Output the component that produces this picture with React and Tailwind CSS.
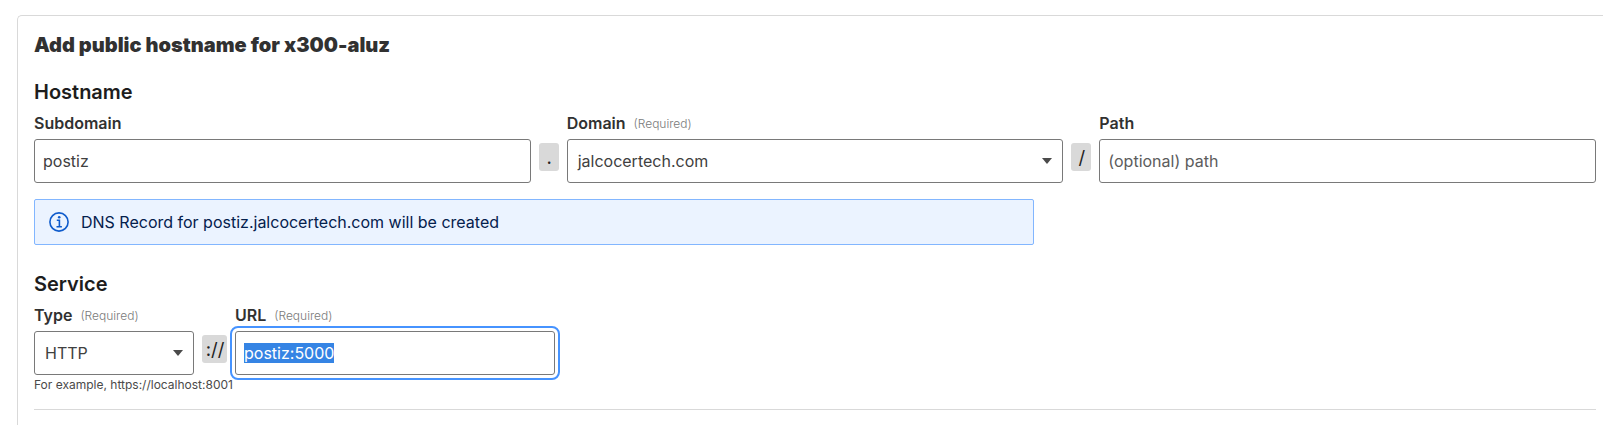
function Label({ children, required }) {
  return (
    <div className="flex h-6 items-center gap-2 leading-6">
      <span className="font-semibold text-[#313131]">{children}</span>
      {required && <span className="pt-px text-xs font-light text-[#7a7a7a]">(Required)</span>}
    </div>
  );
}

function Caret() {
  return (
    <svg className="h-[6px] w-[10px] shrink-0" viewBox="0 0 10 6" fill="#4a4a4a">
      <path d="M0 0h10L5 6z" />
    </svg>
  );
}

function Select({ children }) {
  return (
    <div className="flex h-11 items-center justify-between rounded-[3px] border border-[#797979] pr-[10px] pl-[10px] text-[#404040]">
      <span>{children}</span>
      <Caret />
    </div>
  );
}

function Separator({ children, wide }) {
  return (
    <div
      className={
        (wide ? "w-[25px]" : "w-5") +
        " mt-8 flex h-7 shrink-0 items-center justify-center rounded-[3px] bg-[#d9d9d9] pt-px pl-px text-[18.5px] leading-none text-[#222222]"
      }
    >
      {children}
    </div>
  );
}

function Input({ children }) {
  return (
    <div className="flex h-11 items-center rounded-[3px] border border-[#797979] px-2 text-[#404040]">
      {children}
    </div>
  );
}

export default function App() {
  return (
    <div className="h-[425px] overflow-hidden bg-white pt-[15px] pl-[17px] font-['Inter',sans-serif] text-base">
      <section className="h-[440px] rounded-tl-[5px] border-t border-l border-[#d9d9d9] pt-[14px] pr-[7px] pl-4">
        <h1 className="text-xl leading-[30px] font-black text-[#313131]">
          Add public hostname for x300-aluz
        </h1>

        <h2 className="mt-[17px] text-xl leading-[30px] font-semibold text-[#1d1d1d]">Hostname</h2>
        <div className="mt-1 flex gap-2">
          <div className="flex flex-1 flex-col gap-1">
            <Label>Subdomain</Label>
            <Input>postiz</Input>
          </div>
          <Separator>.</Separator>
          <div className="flex flex-1 flex-col gap-1">
            <Label required>Domain</Label>
            <Select>jalcocertech.com</Select>
          </div>
          <Separator>/</Separator>
          <div className="flex flex-1 flex-col gap-1">
            <Label>Path</Label>
            <Input>
              <span className="text-[#5c5c5c]">(optional) path</span>
            </Input>
          </div>
        </div>

        <div className="mt-4 flex h-[46px] w-[1000px] items-center rounded-[2px] border border-[#82b6ff] bg-[#ebf3ff] pl-[14px] text-[#04204d]">
          <svg className="mr-3 h-5 w-5" viewBox="0 0 20 20" fill="none" stroke="#0f5bcc" strokeWidth="1.6">
            <circle cx="10" cy="10" r="9.1" />
            <path d="M7.8 8.3h2.6v6.3M7.5 14.8h5.4" />
            <circle cx="10.2" cy="5.3" r="1.3" fill="#0f5bcc" stroke="none" />
          </svg>
          <span>DNS Record for postiz.jalcocertech.com will be created</span>
        </div>

        <h2 className="mt-6 text-xl leading-[30px] font-semibold text-[#1d1d1d]">Service</h2>
        <div className="mt-1 flex gap-2">
          <div className="flex w-40 flex-col gap-1">
            <Label required>Type</Label>
            <Select>HTTP</Select>
          </div>
          <Separator wide>://</Separator>
          <div className="flex w-80 flex-col gap-1">
            <Label required>URL</Label>
            <div className="rounded-[3px] outline-2 outline-offset-[3px] outline-[#4693ff]">
              <Input>
                <span className="h-5 bg-[#3584e4] leading-5 text-white">postiz:5000</span>
              </Input>
            </div>
          </div>
        </div>
        <p className="mt-[1px] text-xs leading-[18px] text-[#4a4a4a]">
          For example, https://localhost:8001
        </p>
        <hr className="mt-[15px] border-[#d9d9d9]" />
      </section>
    </div>
  );
}
